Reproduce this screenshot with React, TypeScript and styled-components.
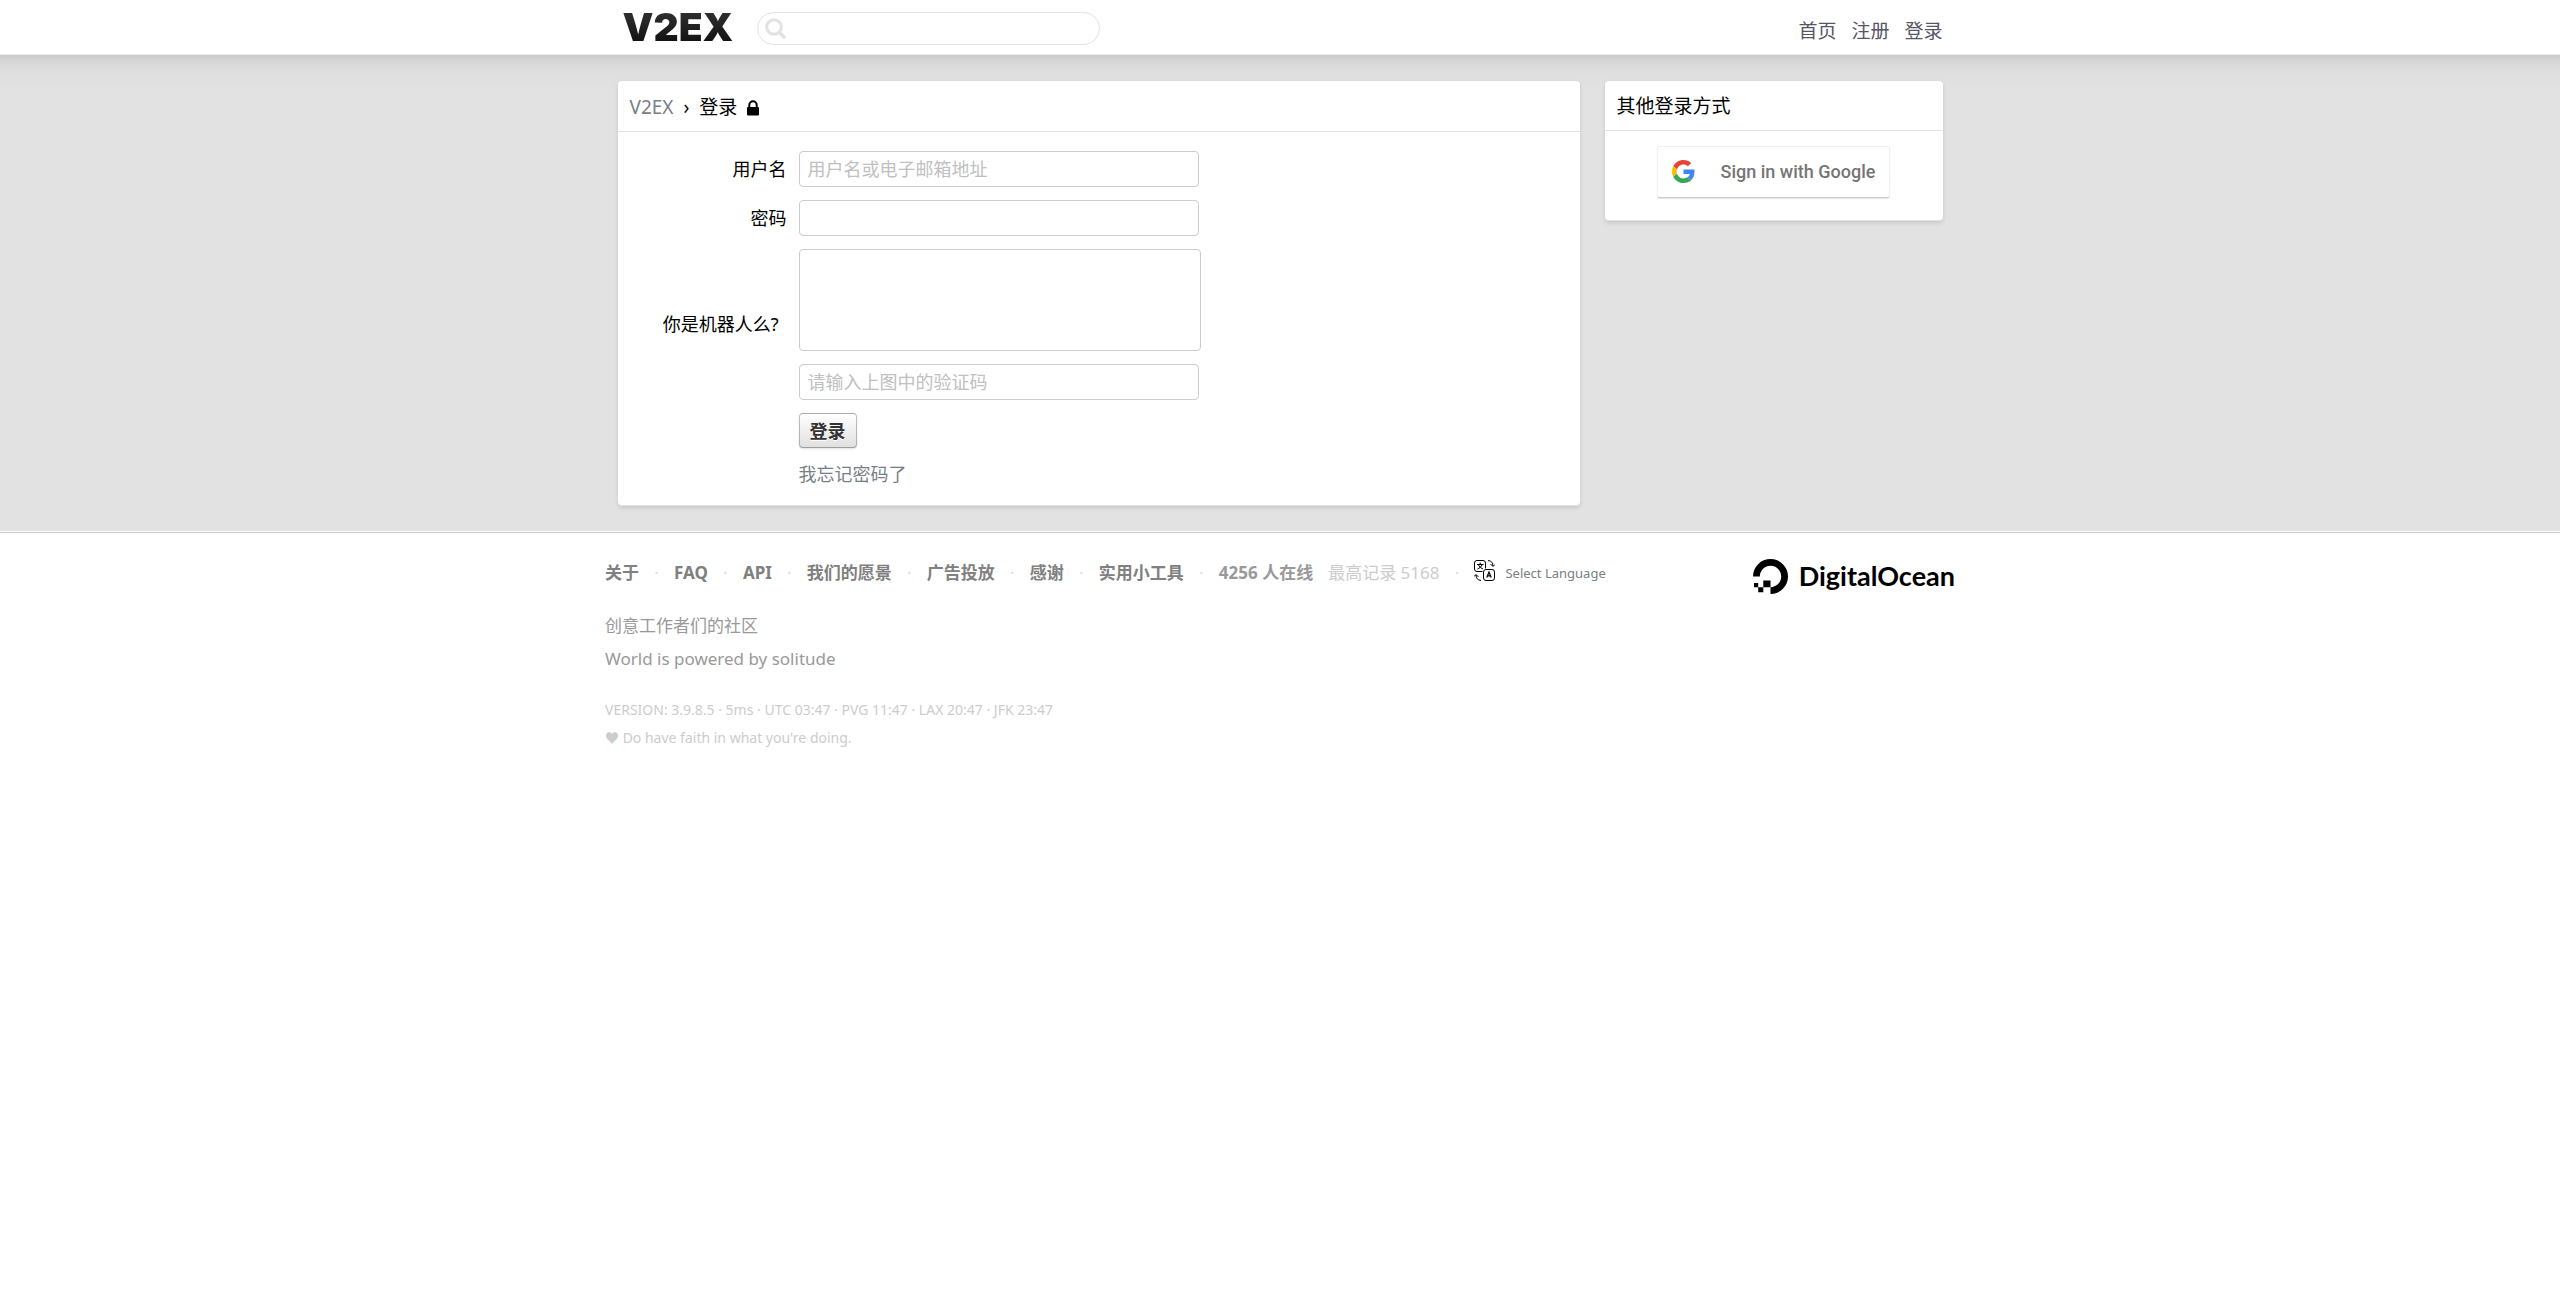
import React from "react";
import styled, { createGlobalStyle } from "styled-components";

const GlobalStyle = createGlobalStyle`
  * { box-sizing: border-box; }
  body {
    margin: 0;
    background: #fff;
    color: #000;
    font-family: "Noto Sans", "Noto Sans CJK SC", sans-serif;
    font-size: 17px;
    line-height: 24px;
  }
  a { text-decoration: none; }
`;

const Container = styled.div`
  max-width: 1325px;
  margin: 0 auto;
`;

const Header = styled.header`
  background: #fff;
  border-bottom: 1px solid #eaeaea;
`;

const HeaderRow = styled(Container)`
  display: flex;
  align-items: center;
  height: 54px;
`;

const Logo = styled.a`
  padding: 0 24px 0 5px;
  font-family: Inter, sans-serif;
  font-size: 39px;
  font-weight: 900;
  line-height: 54px;
  color: transparent;
  background: linear-gradient(#2e2e2e 25%, #111 80%);
  background-clip: text;
`;

const SearchBox = styled.label`
  display: flex;
  align-items: center;
  width: 343px;
  height: 33px;
  margin-top: 2px;
  padding: 0 14px 0 7px;
  gap: 8px;
  border: 1px solid #e2e2e2;
  border-radius: 17px;
`;

const SearchInput = styled.input`
  flex: 1;
  min-width: 0;
  border: 0;
  outline: 0;
  background: transparent;
  font: inherit;
`;

const Nav = styled.nav`
  display: flex;
  gap: 15px;
  margin-left: auto;
  padding-top: 8px;
`;

const NavLink = styled.a`
  font-size: 19px;
  color: #556;
`;

const Wrapper = styled.main`
  padding: 26px 0 25px;
  background: linear-gradient(#c9c9c9 0, #d6d6d6 6px, #dedede 15px, #e2e2e2 36px);
  border-bottom: 1px solid #fff;
`;

const Columns = styled(Container)`
  display: grid;
  grid-template-columns: minmax(0, 1fr) 338px;
  align-items: start;
  gap: 25px;
`;

const Box = styled.section`
  background: #fff;
  border-bottom: 1px solid #e2e2e2;
  border-radius: 4px;
  box-shadow: 0 2px 4px rgba(0, 0, 0, 0.12);
`;

const BoxHeader = styled.h1<{ $compact?: boolean }>`
  display: flex;
  align-items: center;
  gap: 10px;
  margin: 0;
  padding: ${(p) => (p.$compact ? "13px 12px 11px" : "14px 12px 11px")};
  border-bottom: 1px solid #e2e2e2;
  font-size: 19px;
  font-weight: 400;
  line-height: 25px;
`;

const Crumb = styled.a`
  color: #778087;
`;

const Form = styled.form`
  display: grid;
  grid-template-columns: 169px minmax(0, 1fr);
  align-items: center;
  justify-items: start;
  gap: 13px 12px;
  padding: 19px 13px 18px 0;
`;

const Label = styled.label`
  justify-self: end;
  font-size: 18px;
`;

const CaptchaLabel = styled(Label)`
  align-self: end;
  padding: 0 8px 15px 0;
`;

const Field = styled.input`
  grid-column: 2;
  width: 400px;
  height: 36px;
  padding: 0 8px;
  border: 1px solid #ccc;
  border-radius: 4px;
  background: #fff;
  font: inherit;
  font-size: 18px;
  &::placeholder { color: #c0c0c0; opacity: 1; }
`;

const Captcha = styled.div`
  width: 402px;
  height: 102px;
  border: 1px solid #ccc;
  border-radius: 4px;
`;

const Submit = styled.button`
  grid-column: 2;
  height: 35px;
  padding: 0 10px;
  border: 1px solid rgba(80, 80, 90, 0.35);
  border-bottom-color: rgba(60, 60, 70, 0.5);
  border-radius: 4px;
  background: linear-gradient(#fff, #e0e0e0);
  box-shadow: 0 1px 2px rgba(66, 66, 77, 0.15);
  color: #333;
  font: inherit;
  font-size: 18px;
  font-weight: 700;
  line-height: 32px;
  text-shadow: 0 1px 0 #fff;
`;

const Forgot = styled.a`
  grid-column: 2;
  color: #778087;
  font-size: 18px;
  line-height: 26px;
`;

const GoogleCell = styled.div`
  display: flex;
  justify-content: center;
  padding: 15px 12px 22px;
`;

const GoogleButton = styled.button`
  display: flex;
  align-items: center;
  gap: 26px;
  height: 52px;
  padding: 0 14px 2px;
  border: 1px solid #f0f0f0;
  border-bottom-color: #ccc;
  border-radius: 3px;
  background: #fff;
  box-shadow: 0 1px 1px rgba(0, 0, 0, 0.1);
  color: #757575;
  font-family: Roboto, sans-serif;
  font-size: 18px;
  font-weight: 500;
`;

const Footer = styled.footer`
  border-top: 1px solid #ccc;
`;

const FooterInner = styled.div`
  display: flex;
  justify-content: space-between;
  align-items: flex-start;
  max-width: 1350px;
  margin: 0 auto;
  padding-top: 25px;
`;

const FooterNav = styled.div`
  display: flex;
  align-items: center;
  height: 30px;
  white-space: nowrap;
  font-size: 17px;
`;

const FooterLink = styled.a`
  color: #808080;
  font-weight: 700;
`;

const Dot = styled.span`
  width: 35px;
  text-align: center;
  color: #ddd;
`;

const Online = styled.strong`
  color: #999;
`;

const Record = styled.span`
  padding-left: 15px;
  color: #ccc;
`;

const Language = styled.a`
  display: flex;
  align-items: center;
  gap: 10px;
  color: #778087;
  font-size: 13px;
  svg { margin-bottom: 6px; }
`;

const Motto = styled.p`
  margin: 21px 0 0;
  color: #999;
  font-size: 17px;
  line-height: 33px;
`;

const Meta = styled.p`
  margin: 21px 0 0;
  color: #ccc;
  font-size: 14px;
  line-height: 28px;
`;

const Sponsor = styled.a`
  display: flex;
  align-items: center;
  gap: 11px;
  height: 36px;
  color: #000;
  font-family: Lato, sans-serif;
  font-size: 27px;
  font-weight: 700;
`;

const SearchIcon = () => (
  <svg width="21" height="21" viewBox="0 0 21 21" fill="none" stroke="#e2e2e2" aria-hidden="true">
    <circle cx="9" cy="9" r="7.3" strokeWidth="3" />
    <path d="M14.5 14.5L19 19" strokeWidth="3.6" strokeLinecap="round" />
  </svg>
);

const LockIcon = () => (
  <svg width="12" height="16" viewBox="0 0 12 16" aria-hidden="true">
    <path d="M2.300 8V5a3.700 3.700 0 0 1 7.400 0v3" fill="none" stroke="#000" strokeWidth="2" />
    <rect y="7" width="12" height="8.500" rx="1" />
  </svg>
);

const GoogleIcon = () => (
  <svg width="23" height="23" viewBox="0 0 48 48" aria-hidden="true">
    <path fill="#EA4335" d="M24 9.5c3.54 0 6.71 1.22 9.21 3.6l6.85-6.85C35.9 2.38 30.47 0 24 0 14.62 0 6.51 5.38 2.56 13.22l7.98 6.19C12.43 13.72 17.74 9.5 24 9.5z" />
    <path fill="#4285F4" d="M46.98 24.55c0-1.57-.15-3.09-.38-4.55H24v9.02h12.94c-.58 2.96-2.26 5.48-4.78 7.18l7.73 6c4.51-4.18 7.09-10.36 7.09-17.65z" />
    <path fill="#FBBC05" d="M10.53 28.59c-.48-1.45-.76-2.99-.76-4.59s.27-3.14.76-4.59l-7.98-6.19C.92 16.46 0 20.12 0 24c0 3.88.92 7.54 2.56 10.78l7.97-6.19z" />
    <path fill="#34A853" d="M24 48c6.48 0 11.93-2.13 15.89-5.81l-7.73-6c-2.15 1.45-4.92 2.3-8.16 2.3-6.26 0-11.57-4.22-13.47-9.91l-7.98 6.19C6.51 42.62 14.62 48 24 48z" />
  </svg>
);

const LanguageIcon = () => (
  <svg width="21" height="21" viewBox="0 0 21 21" fill="none" stroke="#000" aria-hidden="true">
    <path d="M11.5 8.500V3A2.500 2.500 0 0 0 9 .500H3A2.500 2.500 0 0 0 .500 3v6A2.500 2.500 0 0 0 3 11.500h5.500" />
    <rect x="9.500" y="9.500" width="11" height="11" rx="2.500" />
    <path d="M3 4.500h6.500M6.200 2.500v2M4.500 5q1.500 3 4.500 4M8 5q-1.500 3-4.500 4" />
    <path d="M12.800 17.500l2.200-5.500 2.200 5.500M13.500 15.800h3" strokeWidth="1.200" />
    <path d="M14 .500q5 .500 5 5.500M16.500 4l2.500 2.500L21 4.500M7 20.500q-5-.500-5-5.500M0 16.500L2 14.500 4.500 17" />
  </svg>
);

const OceanIcon = () => (
  <svg width="35" height="35" viewBox="0 0 35 35" aria-hidden="true">
    <path d="M17.500 35v-6.800A10.700 10.700 0 1 0 6.800 17.500H0A17.500 17.500 0 1 1 17.500 35z" />
    <path d="M10.300 21.500h7.200v6.700h-7.200zM5.200 28.200h5.100v5.100H5.200zM1 23.900h4.200v4.300H1z" />
  </svg>
);

const footerLinks = ["关于", "FAQ", "API", "我们的愿景", "广告投放", "感谢", "实用小工具"];

export default function App() {
  return (
    <>
      <GlobalStyle />
      <Header>
        <HeaderRow>
          <Logo href="#">V2EX</Logo>
          <SearchBox>
            <SearchIcon />
            <SearchInput type="text" aria-label="Search" />
          </SearchBox>
          <Nav>
            {["首页", "注册", "登录"].map((t) => (
              <NavLink key={t} href="#">{t}</NavLink>
            ))}
          </Nav>
        </HeaderRow>
      </Header>
      <Wrapper>
        <Columns>
          <Box>
            <BoxHeader>
              <Crumb href="#">V2EX</Crumb>
              <span>›</span>
              <span>登录</span>
              <LockIcon />
            </BoxHeader>
            <Form onSubmit={(e) => e.preventDefault()}>
              <Label htmlFor="user">用户名</Label>
              <Field id="user" type="text" placeholder="用户名或电子邮箱地址" />
              <Label htmlFor="password">密码</Label>
              <Field id="password" type="password" />
              <CaptchaLabel htmlFor="captcha">你是机器人么?</CaptchaLabel>
              <Captcha />
              <Field id="captcha" type="text" placeholder="请输入上图中的验证码" />
              <Submit type="submit">登录</Submit>
              <Forgot href="#">我忘记密码了</Forgot>
            </Form>
          </Box>
          <Box>
            <BoxHeader as="h2" $compact>其他登录方式</BoxHeader>
            <GoogleCell>
              <GoogleButton type="button">
                <GoogleIcon />
                Sign in with Google
              </GoogleButton>
            </GoogleCell>
          </Box>
        </Columns>
      </Wrapper>
      <Footer>
        <FooterInner>
          <div>
            <FooterNav>
              {footerLinks.map((t) => (
                <React.Fragment key={t}>
                  <FooterLink href="#">{t}</FooterLink>
                  <Dot>·</Dot>
                </React.Fragment>
              ))}
              <Online>4256 人在线</Online>
              <Record>最高记录 5168</Record>
              <Dot>·</Dot>
              <Language href="#">
                <LanguageIcon />
                Select Language
              </Language>
            </FooterNav>
            <Motto>
              创意工作者们的社区
              <br />
              World is powered by solitude
            </Motto>
            <Meta>
              VERSION: 3.9.8.5 · 5ms · UTC 03:47 · PVG 11:47 · LAX 20:47 · JFK 23:47
              <br />
              ♥ Do have faith in what you're doing.
            </Meta>
          </div>
          <Sponsor href="#">
            <OceanIcon />
            DigitalOcean
          </Sponsor>
        </FooterInner>
      </Footer>
    </>
  );
}
